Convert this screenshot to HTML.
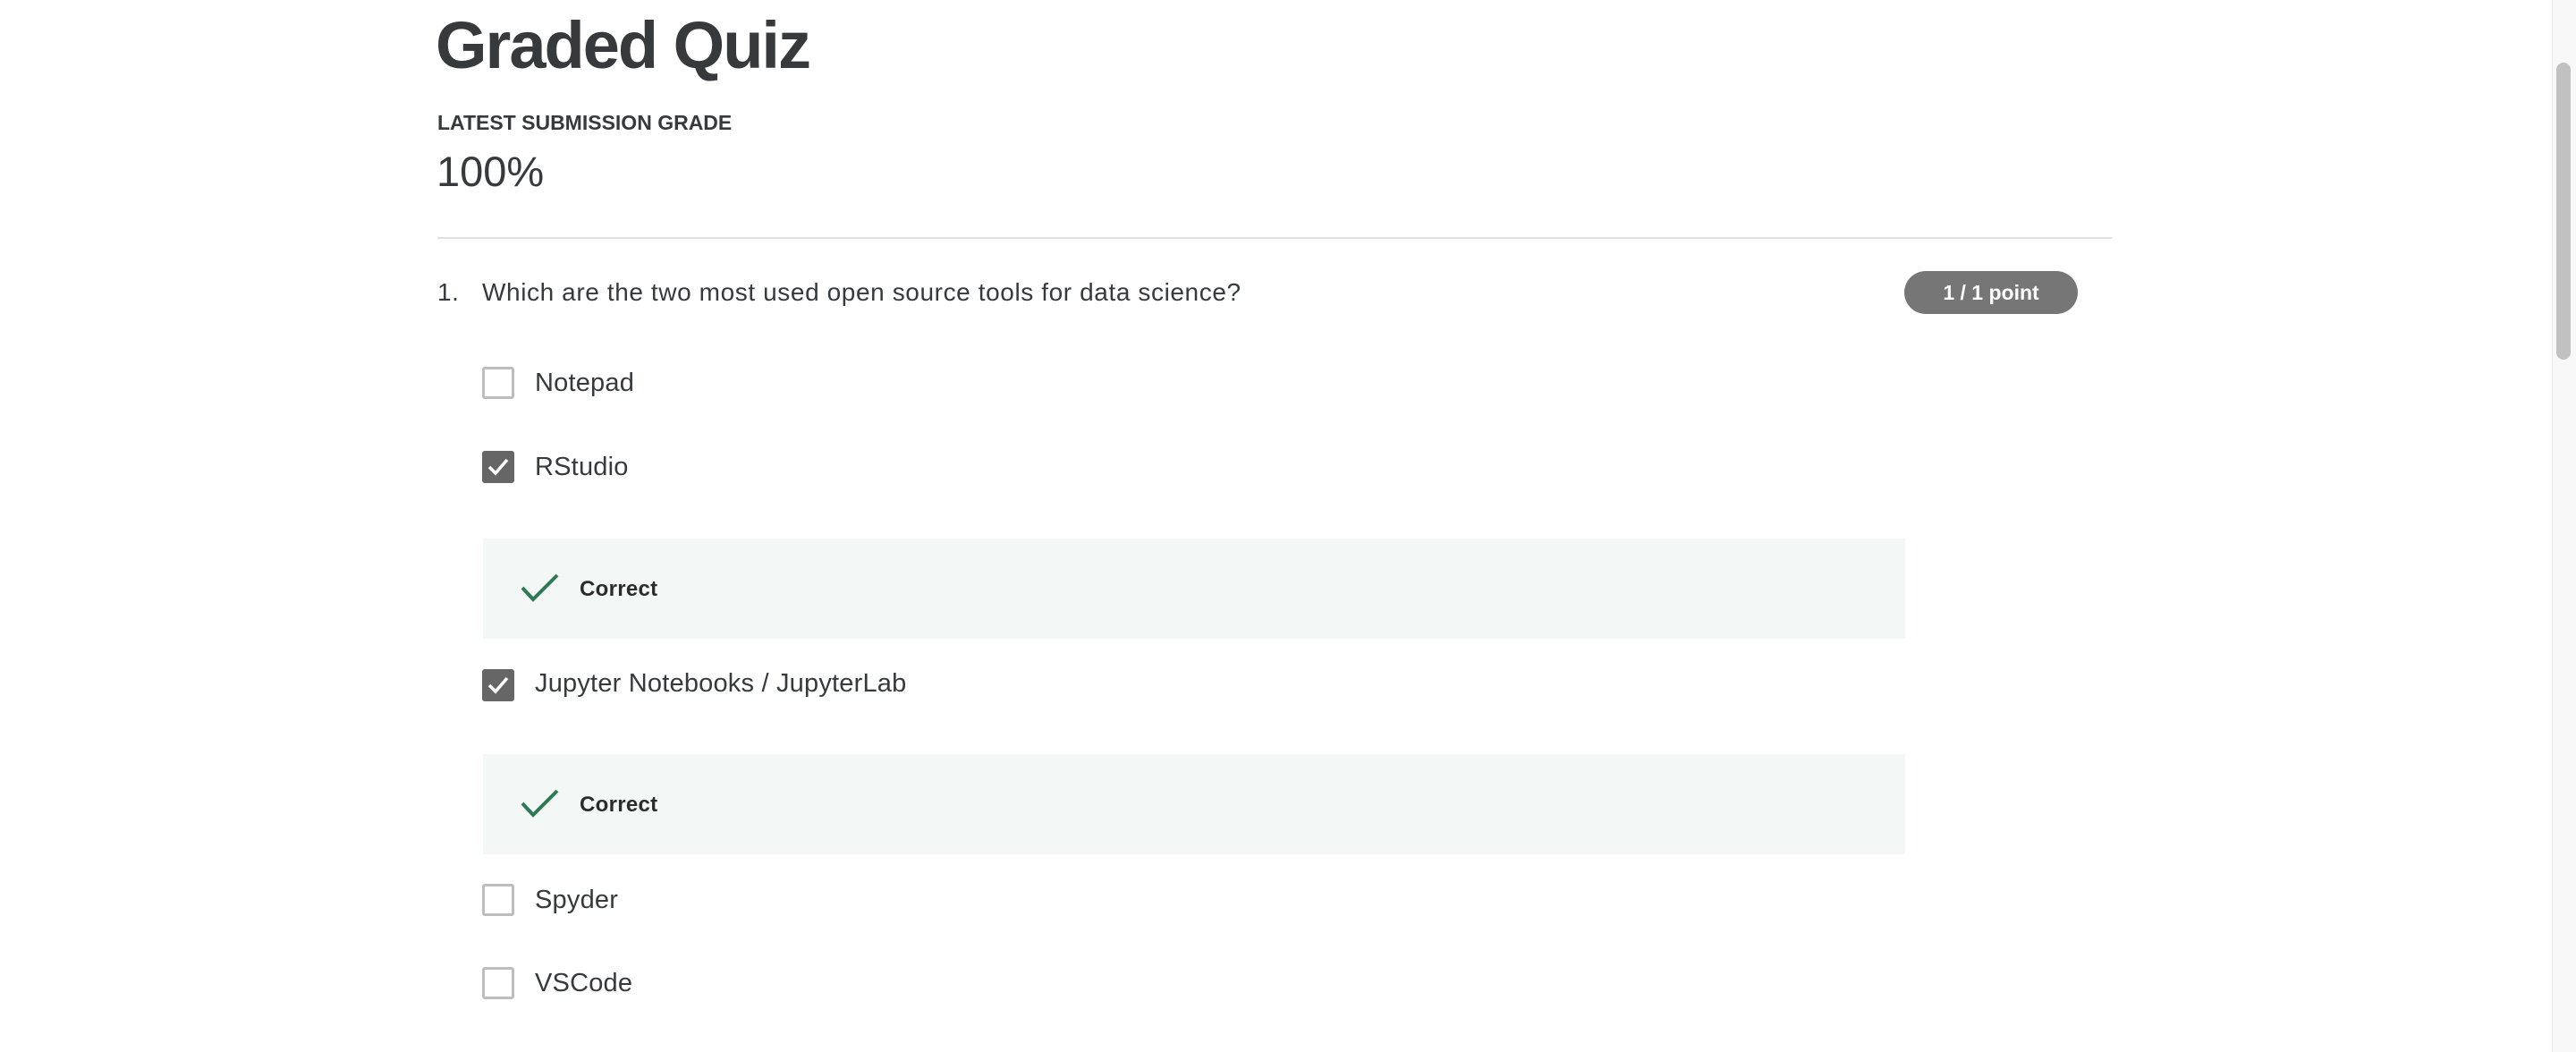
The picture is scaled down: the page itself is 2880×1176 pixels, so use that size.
<!DOCTYPE html>
<html><head><meta charset="utf-8"><style>
*{margin:0;padding:0;box-sizing:border-box}
html,body{width:2880px;height:1176px;overflow:hidden;background:#fff;font-family:"Liberation Sans",sans-serif;color:#373a3c}
.a{position:absolute;white-space:nowrap}
.cb{position:absolute;left:539px;width:36px;height:36px;border:3px solid #bdbdbd;border-radius:3px;background:#fff}
.cb.on{background:#666;border-color:#666}
.lbl{position:absolute;left:598px;font-size:29px;color:#373a3c;line-height:1;letter-spacing:0.2px}
.fb{position:absolute;left:540px;width:1590px;height:112px;background:#f3f8f6}
.fb span{position:absolute;left:108px;top:43px;font-size:24px;font-weight:bold;color:#2b2b2b;letter-spacing:0.3px}
.fb svg{position:absolute;left:42px;top:38px}
</style></head><body>
<div class="a" style="left:487px;top:8px;font-size:74px;font-weight:bold;color:#373a3c;letter-spacing:-2px">Graded Quiz</div>
<div class="a" style="left:489px;top:124px;font-size:23px;font-weight:bold;color:#373a3c">LATEST SUBMISSION GRADE</div>
<div class="a" style="left:488px;top:164px;font-size:47px;color:#373a3c">100%</div>
<div class="a" style="left:489px;top:265px;width:1872px;height:2px;background:#e0e0e0"></div>
<div class="a" style="left:489px;top:311px;font-size:28px;letter-spacing:0.6px">1.</div>
<div class="a" style="left:539px;top:311px;font-size:28px;letter-spacing:0.6px">Which are the two most used open source tools for data science?</div>
<div class="a" style="left:2129px;top:303px;width:194px;height:48px;border-radius:24px;background:#767676;color:#fff;font-weight:bold;font-size:23px;text-align:center;line-height:48px">1 / 1 point</div>

<div class="cb" style="top:410px"></div><div class="lbl" style="top:414px">Notepad</div>
<div class="cb on" style="top:504px"><svg width="30" height="30" viewBox="0 0 30 30" style="position:absolute;left:0;top:0"><path d="M5 15 L12 22 L25 7" fill="none" stroke="#fff" stroke-width="3.5"/></svg></div><div class="lbl" style="top:508px">RStudio</div>
<div class="fb" style="top:602px"><svg width="44" height="34" viewBox="0 0 44 34"><path d="M2 17 L14 30 L41 3" fill="none" stroke="#2d7a54" stroke-width="4"/></svg><span>Correct</span></div>
<div class="cb on" style="top:748px"><svg width="30" height="30" viewBox="0 0 30 30" style="position:absolute;left:0;top:0"><path d="M5 15 L12 22 L25 7" fill="none" stroke="#fff" stroke-width="3.5"/></svg></div><div class="lbl" style="top:750px">Jupyter Notebooks / JupyterLab</div>
<div class="fb" style="top:843px"><svg width="44" height="34" viewBox="0 0 44 34"><path d="M2 17 L14 30 L41 3" fill="none" stroke="#2d7a54" stroke-width="4"/></svg><span>Correct</span></div>
<div class="cb" style="top:988px"></div><div class="lbl" style="top:992px">Spyder</div>
<div class="cb" style="top:1081px"></div><div class="lbl" style="top:1085px">VSCode</div>

<div class="a" style="left:2853px;top:0;width:27px;height:1176px;background:#f8f8f8;border-left:1px solid #ececec"></div>
<div class="a" style="left:2858px;top:70px;width:16px;height:332px;border-radius:8px;background:#c1c1c1"></div>
</body></html>
